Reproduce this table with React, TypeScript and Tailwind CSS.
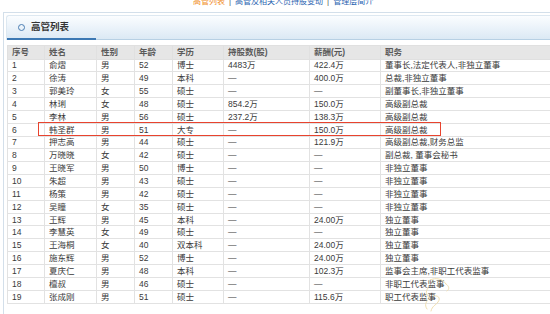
import React from 'react';

type Row = [string, string, string, string, string, string, string, string];

const rows: Row[] = [
    ['1', '俞熠', '男', '52', '博士', '4483万', '422.4万', '董事长,法定代表人,非独立董事'],
    ['2', '徐涛', '男', '49', '本科', '—', '400.0万', '总裁,非独立董事'],
    ['3', '郭美玲', '女', '55', '硕士', '—', '—', '副董事长,非独立董事'],
    ['4', '林琍', '女', '48', '硕士', '854.2万', '150.0万', '高级副总裁'],
    ['5', '李林', '男', '56', '硕士', '237.2万', '138.3万', '高级副总裁'],
    ['6', '韩圣群', '男', '51', '大专', '—', '150.0万', '高级副总裁'],
    ['7', '押志高', '男', '44', '硕士', '—', '121.9万', '高级副总裁,财务总监'],
    ['8', '万晓晓', '女', '42', '硕士', '—', '—', '副总裁, 董事会秘书'],
    ['9', '王晓军', '男', '50', '博士', '—', '—', '非独立董事'],
    ['10', '朱超', '男', '43', '硕士', '—', '—', '非独立董事'],
    ['11', '杨策', '男', '42', '硕士', '—', '—', '非独立董事'],
    ['12', '吴瞳', '女', '35', '硕士', '—', '—', '非独立董事'],
    ['13', '王辉', '男', '45', '本科', '—', '24.00万', '独立董事'],
    ['14', '李慧英', '女', '49', '硕士', '—', '—', '独立董事'],
    ['15', '王海桐', '女', '40', '双本科', '—', '24.00万', '独立董事'],
    ['16', '施东辉', '男', '52', '博士', '—', '24.00万', '独立董事'],
    ['17', '夏庆仁', '男', '48', '本科', '—', '102.3万', '监事会主席,非职工代表监事'],
    ['18', '檀叔', '男', '46', '硕士', '—', '—', '非职工代表监事'],
    ['19', '张成刚', '男', '51', '硕士', '—', '115.6万', '职工代表监事'],
];

const headers = ['序号', '姓名', '性别', '年龄', '学历', '持股数(股)', '薪酬(元)', '职务'];

const App: React.FC = () => {
    return (
        <div className="relative w-[550px] h-[314px] overflow-hidden bg-white font-['Liberation_Sans','Noto_Sans_CJK_SC',sans-serif]">
            {/* top nav, cut off by the window */}
            <div className="-mt-[4px] h-[16px] pl-[193px] flex items-start text-[8px] leading-[12px] gap-[4px]">
                <span className="text-[#f08c25]">高管列表</span>
                <span className="text-[#555]">|</span>
                <span className="text-[#2a63b0]">高管及相关人员持股变动</span>
                <span className="text-[#555]">|</span>
                <span className="text-[#2a63b0]">管理层简介</span>
            </div>

            <div className="ml-[3px] h-[400px] border-l border-t border-[#d3dfea] pl-[2px] pt-[2px]">
                <div className="flex h-[25px] border-l border-t border-[#dde8f1] rounded-tl-[3px] bg-gradient-to-b from-[#fbfdff] to-[#dae8f4]">
                    <div className="w-[89px] flex items-center border-b-2 border-[#3c78b3]">
                        <span className="ml-[11px] w-[7px] h-[7px] rounded-full border-[1.5px] border-[#4a7db2]" />
                        <span className="ml-[6px] text-[9.5px] font-bold text-[#333]">高管列表</span>
                    </div>
                    <div className="flex-1 border-b border-[#b7d0e4]" />
                </div>

                <table className="mt-[5px] ml-[1px] w-[620px] table-fixed border-collapse text-[8.5px] text-[#3a3a3a]">
                    <colgroup>
                        <col className="w-[37px]" />
                        <col className="w-[52px]" />
                        <col className="w-[38px]" />
                        <col className="w-[38px]" />
                        <col className="w-[51px]" />
                        <col className="w-[86px]" />
                        <col className="w-[71px]" />
                        <col />
                    </colgroup>
                    <thead>
                        <tr className="h-[13.5px] bg-[#e6e6e6] text-[#5a5a5a] font-bold">
                            {headers.map((h) => (
                                <th key={h} className="px-[4px] py-0 text-left font-bold leading-[11px] border border-[#e0e0e0] whitespace-nowrap">
                                    {h}
                                </th>
                            ))}
                        </tr>
                    </thead>
                    <tbody>
                        {rows.map((r) => (
                            <tr key={r[0]} className="h-[12.85px]">
                                {r.map((c, i) => (
                                    <td key={i} className="px-[4px] py-0 leading-[10px] border border-[#e2e2e2] whitespace-nowrap">
                                        {c}
                                    </td>
                                ))}
                            </tr>
                        ))}
                    </tbody>
                </table>
            </div>

            {/* highlight box */}
            <div className="absolute left-[38px] top-[122px] w-[403px] h-[13.5px] border-[1.5px] border-[#e8432e]" />

            {/* faint watermark */}
            <svg className="absolute left-[416px] top-[276px]" width="40" height="38" viewBox="0 0 40 38" fill="none">
                <path d="M14 4 C20 1 27 3 30 8 M30 8 C33 10 34 13 31 15 M12 12 C9 16 10 20 14 22 C10 25 8 29 11 33 M18 20 C22 19 25 22 22 26 C20 29 16 30 15 35" stroke="#f1dfb0" strokeWidth="1" strokeLinecap="round" />
            </svg>
        </div>
    );
};

export default App;
